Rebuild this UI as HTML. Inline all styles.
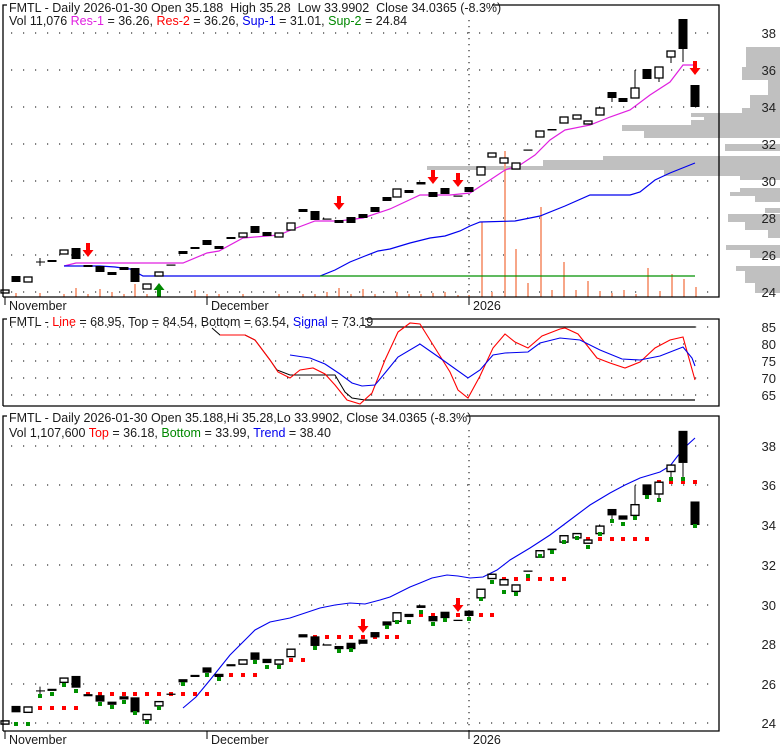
<!DOCTYPE html>
<html><head><meta charset="utf-8"><style>
html,body{margin:0;padding:0;background:#fff;}
svg{display:block;font-family:"Liberation Sans",Arial,sans-serif;}
.t{font-size:12.5px;fill:#1a1a1a;white-space:pre;}
.ax{font-size:13px;fill:#222;}
.g{stroke:#000;stroke-width:1;stroke-dasharray:1.2 10.8;}
.f{fill:#000;}
.h{fill:#fff;stroke:#000;stroke-width:1.3;}
.v{fill:#f7a688;}
.p{fill:#c0c0c0;}
</style></head><body>
<svg width="780" height="745" viewBox="0 0 780 745" xmlns="http://www.w3.org/2000/svg">
<defs>
<g id="cd">
<line x1="40" y1="258" x2="40" y2="266" stroke="#000"/><line x1="36" y1="262" x2="45" y2="262" stroke="#000"/>
<line x1="635" y1="70" x2="635" y2="88" stroke="#000"/>
<line x1="683" y1="49" x2="683" y2="62" stroke="#000"/>
<line x1="671" y1="57" x2="671" y2="63" stroke="#000"/>
<line x1="659" y1="78" x2="659" y2="82" stroke="#000"/>
<line x1="612" y1="98" x2="612" y2="102" stroke="#000"/>
<rect class="h" x="1" y="290" width="8" height="3"/>
<rect class="f" x="11.5" y="276" width="9" height="6"/>
<rect class="h" x="24" y="277" width="8" height="5"/>
<rect class="f" x="47.5" y="260" width="9" height="2"/>
<rect class="h" x="60" y="250" width="8" height="4"/>
<rect class="f" x="71.5" y="248" width="9" height="11"/>
<rect class="f" x="83.5" y="265" width="9" height="2"/>
<rect class="f" x="95.5" y="266" width="9" height="6"/>
<rect class="f" x="107.5" y="272" width="9" height="3"/>
<rect class="f" x="119.5" y="267" width="9" height="3"/>
<rect class="f" x="130.5" y="268" width="9" height="14"/>
<rect class="h" x="143" y="284" width="8" height="5"/>
<rect class="h" x="155" y="272" width="8" height="4"/>
<rect class="f" x="166.5" y="264.5" width="9" height="1.2"/>
<rect class="f" x="178.5" y="251" width="9" height="3"/>
<rect class="f" x="190.5" y="247" width="9" height="2"/>
<rect class="f" x="202.5" y="240" width="9" height="5"/>
<rect class="f" x="214.5" y="246" width="9" height="3"/>
<rect class="f" x="226.5" y="237" width="9" height="2"/>
<rect class="h" x="239" y="233" width="8" height="4"/>
<rect class="f" x="250.5" y="226" width="9" height="7"/>
<rect class="f" x="262.5" y="232" width="9" height="4"/>
<rect class="h" x="275" y="233" width="8" height="4"/>
<rect class="h" x="287" y="223" width="8" height="7"/>
<rect class="f" x="298.5" y="209" width="9" height="3"/>
<rect class="f" x="310.5" y="211" width="9" height="9"/>
<rect class="f" x="322.5" y="218.5" width="9" height="1.2"/>
<rect class="f" x="334.5" y="220" width="9" height="3"/>
<rect class="f" x="346.5" y="217" width="9" height="6"/>
<rect class="f" x="358.5" y="214" width="9" height="4"/>
<rect class="f" x="370.5" y="207" width="9" height="5"/>
<rect class="f" x="382.5" y="197" width="9" height="4"/>
<rect class="h" x="393" y="189" width="8" height="8"/>
<rect class="f" x="404.5" y="190" width="9" height="3"/>
<rect class="f" x="416.5" y="182" width="9" height="2.5"/>
<rect class="f" x="428.5" y="192" width="9" height="5"/>
<rect class="f" x="440.5" y="188" width="9" height="6"/>
<rect class="f" x="453.5" y="195.5" width="9" height="1.2"/>
<rect class="f" x="464.5" y="187" width="9" height="5"/>
<rect class="h" x="477" y="167" width="8" height="8"/>
<rect class="h" x="488" y="153" width="8" height="4"/>
<rect class="h" x="500" y="158" width="8" height="5"/>
<rect class="h" x="512" y="163" width="8" height="6"/>
<rect class="f" x="523.5" y="149.5" width="9" height="1.2"/>
<rect class="h" x="536" y="131" width="8" height="6"/>
<rect class="f" x="547.5" y="129" width="9" height="1.5"/>
<rect class="h" x="560" y="117" width="8" height="6"/>
<rect class="h" x="573" y="115" width="8" height="4"/>
<rect class="h" x="584" y="121" width="8" height="3"/>
<rect class="h" x="596" y="108" width="8" height="7"/>
<rect class="f" x="607.5" y="92" width="9" height="6"/>
<rect class="f" x="618.5" y="98" width="9" height="4"/>
<rect class="h" x="631" y="88" width="8" height="10"/>
<rect class="f" x="642.5" y="69" width="9" height="10"/>
<rect class="h" x="655" y="67" width="8" height="11"/>
<rect class="h" x="667" y="51" width="8" height="6"/>
<rect class="f" x="678.5" y="19" width="9" height="30"/>
<rect class="f" x="690.5" y="85" width="9" height="22"/>
</g>
<path id="ad" d="M-2,0 h4 v7 h3.5 l-5.5,7 l-5.5,-7 h3.5z" fill="#f00"/>
</defs>

<!-- TOP PANEL -->
<!-- volume profile -->
<g>
<rect class="p" x="746" y="47" width="34" height="20"/>
<rect class="p" x="742" y="67" width="38" height="13"/>
<rect class="p" x="768" y="80" width="12" height="15"/>
<rect class="p" x="750" y="95" width="30" height="13"/>
<rect class="p" x="742" y="108" width="38" height="5"/>
<rect class="p" x="691" y="113" width="89" height="4"/>
<rect class="p" x="704" y="117" width="76" height="3"/>
<rect class="p" x="691" y="120" width="89" height="5"/>
<rect class="p" x="622" y="125" width="158" height="6"/>
<rect class="p" x="644" y="131" width="136" height="7"/>
<rect class="p" x="725" y="144" width="55" height="7"/>
<rect class="p" x="603" y="156" width="177" height="4"/>
<rect class="p" x="543" y="160" width="237" height="6"/>
<rect class="p" x="427" y="166" width="353" height="4"/>
<rect class="p" x="664" y="170" width="116" height="6"/>
<rect class="p" x="740" y="176" width="40" height="4"/>
<rect class="p" x="740" y="188" width="40" height="4"/>
<rect class="p" x="730" y="192" width="50" height="4"/>
<rect class="p" x="755" y="196" width="25" height="6"/>
<rect class="p" x="765" y="208" width="15" height="5"/>
<rect class="p" x="728" y="214" width="52" height="8"/>
<rect class="p" x="745" y="222" width="35" height="8"/>
<rect class="p" x="768" y="230" width="12" height="8"/>
<rect class="p" x="726" y="245" width="54" height="5"/>
<rect class="p" x="750" y="250" width="30" height="8"/>
<rect class="p" x="736" y="266" width="44" height="5"/>
<rect class="p" x="745" y="271" width="35" height="12"/>
<rect class="p" x="755" y="283" width="25" height="10"/>
</g>
<!-- grid -->
<g>
<line class="g" x1="11" x2="719" y1="33" y2="33"/>
<line class="g" x1="11" x2="719" y1="70" y2="70"/>
<line class="g" x1="11" x2="719" y1="107" y2="107"/>
<line class="g" x1="11" x2="719" y1="144" y2="144"/>
<line class="g" x1="11" x2="719" y1="181" y2="181"/>
<line class="g" x1="11" x2="719" y1="218" y2="218"/>
<line class="g" x1="11" x2="719" y1="255" y2="255"/>
<line class="g" x1="11" x2="719" y1="292" y2="292"/>
<line x1="469" y1="20" x2="469" y2="297" stroke="#000" stroke-dasharray="1.2 4.8"/>
</g>
<!-- volume -->
<g>
<rect class="v" x="15" y="293" width="2" height="4"/><rect class="v" x="39" y="293" width="2" height="4"/>
<rect class="v" x="63" y="294" width="2" height="3"/><rect class="v" x="75" y="288" width="2" height="9"/>
<rect class="v" x="87" y="294" width="2" height="3"/><rect class="v" x="99" y="289" width="2" height="8"/>
<rect class="v" x="111" y="292" width="2" height="5"/><rect class="v" x="123" y="294" width="2" height="3"/>
<rect class="v" x="134" y="284" width="2" height="13"/><rect class="v" x="146" y="294" width="2" height="3"/>
<rect class="v" x="194" y="290" width="2" height="7"/><rect class="v" x="206" y="294" width="2" height="3"/>
<rect class="v" x="218" y="294" width="2" height="3"/><rect class="v" x="242" y="294" width="2" height="3"/>
<rect class="v" x="278" y="294" width="2" height="3"/><rect class="v" x="302" y="294" width="2" height="3"/>
<rect class="v" x="314" y="294" width="2" height="3"/><rect class="v" x="326" y="292" width="2" height="5"/>
<rect class="v" x="338" y="288" width="2" height="9"/><rect class="v" x="350" y="294" width="2" height="3"/>
<rect class="v" x="362" y="289" width="2" height="8"/><rect class="v" x="374" y="294" width="2" height="3"/>
<rect class="v" x="396" y="292" width="2" height="5"/><rect class="v" x="408" y="294" width="2" height="3"/>
<rect class="v" x="420" y="294" width="2" height="3"/><rect class="v" x="432" y="293" width="2" height="4"/>
<rect class="v" x="444" y="292" width="2" height="5"/><rect class="v" x="457" y="295" width="2" height="2"/>
<rect class="v" x="468" y="295" width="2" height="2"/><rect class="v" x="481" y="222" width="2" height="75"/>
<rect class="v" x="491" y="292" width="2" height="5"/><rect class="v" x="504" y="151" width="2" height="146"/>
<rect class="v" x="515" y="249" width="2" height="48"/><rect class="v" x="527" y="283" width="2" height="14"/>
<rect class="v" x="540" y="207" width="2" height="90"/><rect class="v" x="551" y="290" width="2" height="7"/>
<rect class="v" x="563" y="262" width="2" height="35"/><rect class="v" x="575" y="290" width="2" height="7"/>
<rect class="v" x="587" y="281" width="2" height="16"/><rect class="v" x="599" y="291" width="2" height="6"/>
<rect class="v" x="611" y="293" width="2" height="4"/><rect class="v" x="623" y="290" width="2" height="7"/>
<rect class="v" x="635" y="294" width="2" height="3"/><rect class="v" x="647" y="268" width="2" height="29"/>
<rect class="v" x="659" y="291" width="2" height="6"/><rect class="v" x="671" y="274" width="2" height="23"/>
<rect class="v" x="683" y="279" width="2" height="18"/><rect class="v" x="695" y="287" width="2" height="10"/>
</g>
<!-- lines -->
<polyline fill="none" stroke="#e020e0" stroke-width="1.2" points="64,266 76,263 183,263 207,253 219,251 243,238 255,237 279,235 291,230 315,221 339,221 363,218 390,209 420,195 450,195 470,193 490,180 505,170 520,165 535,155 550,140 565,130 590,125 610,117 630,110 650,95 670,82 683,65 695,65"/>
<polyline fill="none" stroke="#0000ee" stroke-width="1.2" points="64,266 100,266 115,267 130,269 143,276 320,276 335,270 350,262 365,256 378,251 390,249 410,243 430,238 445,236 460,231 470,226 480,222 515,221 540,216 565,206 590,195 630,195 640,192 655,180 670,173 695,163"/>
<line x1="320" y1="276" x2="695" y2="276" stroke="#009000" stroke-width="1.2"/>
<use href="#cd"/>
<use href="#ad" transform="translate(88,243)"/>
<use href="#ad" transform="translate(339,196)"/>
<use href="#ad" transform="translate(433,170)"/>
<use href="#ad" transform="translate(458,173)"/>
<use href="#ad" transform="translate(695,61)"/>
<path d="M157,297 h4 v-7 h3.5 l-5.5,-7 l-5.5,7 h3.5z" fill="#008800"/>
<!-- frame -->
<path d="M3,297 V5 H7 M492,5 H719 V297 H3" fill="none" stroke="#000" stroke-width="1.3"/>
<text class="t" x="9" y="12">FMTL - Daily 2026-01-30 Open 35.188  High 35.28  Low 33.9902  Close 34.0365 (-8.3%)</text>
<text class="t" x="9" y="25">Vol 11,076 <tspan fill="#e020e0">Res-1</tspan> = 36.26, <tspan fill="#f00">Res-2</tspan> = 36.26, <tspan fill="#0000ee">Sup-1</tspan> = 31.01, <tspan fill="#008800">Sup-2</tspan> = 24.84</text>
<g class="ax" text-anchor="end">
<text x="776" y="38">38</text><text x="776" y="75">36</text><text x="776" y="112">34</text><text x="776" y="149">32</text>
<text x="776" y="186">30</text><text x="776" y="223">28</text><text x="776" y="260">26</text><text x="776" y="297">24</text>
</g>
<path d="M5,297 v8 M207,297 v8 M469,297 v8" stroke="#000"/>
<text class="t" x="9" y="310">November</text>
<text class="t" x="211" y="310">December</text>
<text class="t" x="473" y="310">2026</text>

<!-- MIDDLE PANEL -->
<g>
<line class="g" x1="11" x2="719" y1="327" y2="327"/>
<line class="g" x1="11" x2="719" y1="344" y2="344"/>
<line class="g" x1="11" x2="719" y1="361" y2="361"/>
<line class="g" x1="11" x2="719" y1="378" y2="378"/>
<line class="g" x1="11" x2="719" y1="395" y2="395"/>
</g>
<line x1="365" y1="327" x2="695" y2="327" stroke="#000" stroke-width="1.2"/>
<line x1="365" y1="400" x2="695" y2="400" stroke="#000" stroke-width="1.2"/>
<polyline fill="none" stroke="#000" stroke-width="1" points="212,328 220,335 245,335 255,340 270,360 277,370 290,375 335,375 345,392 352,398 365,400"/>
<polyline fill="none" stroke="#f00" stroke-width="1.1" points="220,335 245,335 255,340 270,360 278,372 290,378 300,370 313,368 325,374 335,385 347,400 360,404 372,393 385,360 398,332 410,323 420,324 435,348 450,372 458,390 468,398 480,376 493,348 505,334 515,342 528,348 542,336 560,329 565,328 578,334 597,358 610,363 625,368 640,362 655,348 670,340 683,337 695,380"/>
<polyline fill="none" stroke="#0000ee" stroke-width="1.1" points="290,355 310,358 325,364 340,374 352,383 362,386 375,385 385,373 398,357 420,344 440,358 468,378 480,370 493,355 505,353 528,352 540,343 560,338 580,340 600,350 622,359 640,360 660,356 683,347 692,358 695,366"/>
<path d="M3,406 V319 H7 M365,319 H719 V406 H3" fill="none" stroke="#000" stroke-width="1.3"/>
<text class="t" x="9" y="326">FMTL - <tspan fill="#f00">Line</tspan> = 68.95, Top = 84.54, Bottom = 63.54, <tspan fill="#0000ee">Signal</tspan> = 73.19</text>
<g class="ax" text-anchor="end">
<text x="776" y="332">85</text><text x="776" y="349">80</text><text x="776" y="366">75</text><text x="776" y="383">70</text><text x="776" y="400">65</text>
</g>

<!-- BOTTOM PANEL -->
<g>
<line class="g" x1="11" x2="719" y1="446" y2="446"/>
<line class="g" x1="11" x2="719" y1="485" y2="485"/>
<line class="g" x1="11" x2="719" y1="525" y2="525"/>
<line class="g" x1="11" x2="719" y1="565" y2="565"/>
<line class="g" x1="11" x2="719" y1="605" y2="605"/>
<line class="g" x1="11" x2="719" y1="644" y2="644"/>
<line class="g" x1="11" x2="719" y1="684" y2="684"/>
<line class="g" x1="11" x2="719" y1="723" y2="723"/>
<line x1="469" y1="430" x2="469" y2="731" stroke="#000" stroke-dasharray="1.2 4.8"/>
</g>
<g fill="#f00">
<rect x="38" y="706" width="4" height="4"/><rect x="50" y="706" width="4" height="4"/><rect x="62" y="706" width="4" height="4"/><rect x="74" y="706" width="4" height="4"/>
<rect x="86" y="692" width="4" height="4"/><rect x="98" y="692" width="4" height="4"/><rect x="110" y="692" width="4" height="4"/><rect x="122" y="692" width="4" height="4"/><rect x="133" y="692" width="4" height="4"/><rect x="145" y="692" width="4" height="4"/><rect x="157" y="692" width="4" height="4"/><rect x="169" y="692" width="4" height="4"/><rect x="181" y="692" width="4" height="4"/><rect x="193" y="692" width="4" height="4"/><rect x="205" y="692" width="4" height="4"/>
<rect x="229" y="673" width="4" height="4"/><rect x="241" y="673" width="4" height="4"/><rect x="253" y="673" width="4" height="4"/>
<rect x="289" y="658" width="4" height="4"/><rect x="301" y="658" width="4" height="4"/>
<rect x="313" y="635" width="4" height="4"/><rect x="325" y="635" width="4" height="4"/><rect x="337" y="635" width="4" height="4"/><rect x="349" y="635" width="4" height="4"/><rect x="361" y="635" width="4" height="4"/><rect x="373" y="635" width="4" height="4"/><rect x="385" y="635" width="4" height="4"/><rect x="395" y="635" width="4" height="4"/>
<rect x="419" y="613" width="4" height="4"/><rect x="431" y="613" width="4" height="4"/><rect x="443" y="613" width="4" height="4"/><rect x="456" y="613" width="4" height="4"/><rect x="479" y="613" width="4" height="4"/><rect x="490" y="613" width="4" height="4"/>
<rect x="502" y="577" width="4" height="4"/><rect x="514" y="577" width="4" height="4"/><rect x="526" y="577" width="4" height="4"/><rect x="538" y="577" width="4" height="4"/><rect x="550" y="577" width="4" height="4"/><rect x="562" y="577" width="4" height="4"/>
<rect x="586" y="537" width="4" height="4"/><rect x="598" y="537" width="4" height="4"/><rect x="610" y="537" width="4" height="4"/><rect x="621" y="537" width="4" height="4"/><rect x="633" y="537" width="4" height="4"/><rect x="645" y="537" width="4" height="4"/>
<rect x="657" y="480" width="4" height="4"/><rect x="669" y="480" width="4" height="4"/><rect x="681" y="480" width="4" height="4"/><rect x="693" y="480" width="4" height="4"/>
</g>
<polyline fill="none" stroke="#0000ee" stroke-width="1.1" points="183,708 196,697 210,680 230,655 255,630 270,622 290,618 320,608 335,605 350,603 365,604 380,600 390,597 410,587 420,583 432,578 447,575 458,576 470,578 483,577 497,570 510,560 530,548 550,535 570,520 590,505 610,493 625,485 640,478 660,472 670,466 683,449 695,438"/>
<use href="#cd" transform="translate(0,410.5) scale(1,1.0703)"/>
<g fill="#009000">
<rect x="14" y="722" width="4" height="4"/><rect x="26" y="722" width="4" height="4"/><rect x="38" y="694" width="4" height="4"/><rect x="50" y="692" width="4" height="4"/>
<rect x="62" y="683" width="4" height="4"/><rect x="74" y="689" width="4" height="4"/><rect x="98" y="702" width="4" height="4"/><rect x="110" y="705" width="4" height="4"/>
<rect x="122" y="700" width="4" height="4"/><rect x="133" y="711" width="4" height="4"/><rect x="145" y="720" width="4" height="4"/><rect x="157" y="706" width="4" height="4"/>
<rect x="181" y="682" width="4" height="4"/><rect x="205" y="673" width="4" height="4"/><rect x="217" y="677" width="4" height="4"/><rect x="253" y="660" width="4" height="4"/>
<rect x="265" y="665" width="4" height="4"/><rect x="277" y="665" width="4" height="4"/><rect x="313" y="646" width="4" height="4"/><rect x="337" y="649" width="4" height="4"/>
<rect x="349" y="648" width="4" height="4"/><rect x="385" y="625" width="4" height="4"/><rect x="395" y="620" width="4" height="4"/><rect x="407" y="620" width="4" height="4"/>
<rect x="419" y="610" width="4" height="4"/><rect x="431" y="622" width="4" height="4"/><rect x="443" y="618" width="4" height="4"/><rect x="467" y="617" width="4" height="4"/>
<rect x="479" y="597" width="4" height="4"/><rect x="490" y="580" width="4" height="4"/><rect x="502" y="590" width="4" height="4"/><rect x="514" y="592" width="4" height="4"/>
<rect x="526" y="574" width="4" height="4"/><rect x="538" y="554" width="4" height="4"/><rect x="550" y="550" width="4" height="4"/><rect x="562" y="540" width="4" height="4"/>
<rect x="575" y="536" width="4" height="4"/><rect x="586" y="545" width="4" height="4"/><rect x="598" y="532" width="4" height="4"/><rect x="610" y="519" width="4" height="4"/>
<rect x="621" y="522" width="4" height="4"/><rect x="633" y="516" width="4" height="4"/><rect x="645" y="495" width="4" height="4"/><rect x="657" y="498" width="4" height="4"/>
<rect x="669" y="477" width="4" height="4"/><rect x="681" y="477" width="4" height="4"/><rect x="693" y="524" width="4" height="4"/>
</g>
<use href="#ad" transform="translate(363,619)"/>
<use href="#ad" transform="translate(458,598)"/>
<path d="M3,731 V416 H7 M466,416 H719 V731 H3" fill="none" stroke="#000" stroke-width="1.3"/>
<text class="t" x="9" y="422">FMTL - Daily 2026-01-30 Open 35.188,Hi 35.28,Lo 33.9902, Close 34.0365 (-8.3%)</text>
<text class="t" x="9" y="437">Vol 1,107,600 <tspan fill="#f00">Top</tspan> = 36.18, <tspan fill="#008800">Bottom</tspan> = 33.99, <tspan fill="#0000ee">Trend</tspan> = 38.40</text>
<g class="ax" text-anchor="end">
<text x="776" y="451">38</text><text x="776" y="490">36</text><text x="776" y="530">34</text><text x="776" y="570">32</text>
<text x="776" y="610">30</text><text x="776" y="649">28</text><text x="776" y="689">26</text><text x="776" y="728">24</text>
</g>
<path d="M5,731 v8 M207,731 v8 M469,731 v8" stroke="#000"/>
<text class="t" x="9" y="744">November</text>
<text class="t" x="211" y="744">December</text>
<text class="t" x="473" y="744">2026</text>
</svg>
</body></html>
